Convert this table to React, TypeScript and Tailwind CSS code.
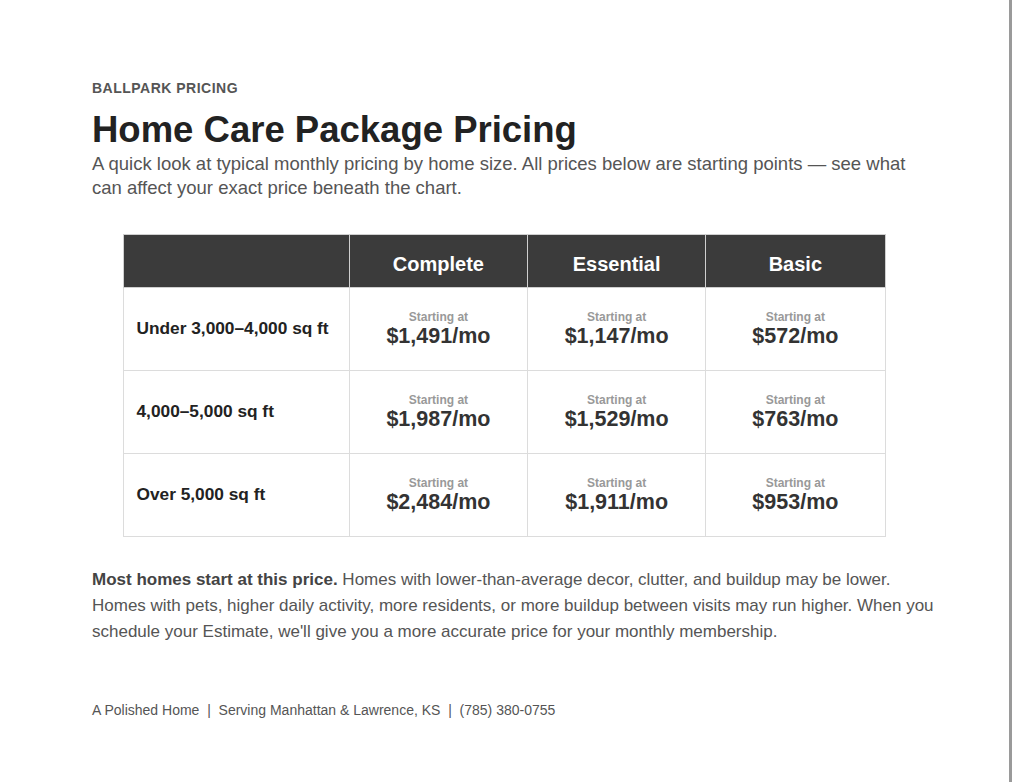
const rows = [
  { label: 'Under 3,000–4,000 sq ft', prices: ['$1,491/mo', '$1,147/mo', '$572/mo'] },
  { label: '4,000–5,000 sq ft', prices: ['$1,987/mo', '$1,529/mo', '$763/mo'] },
  { label: 'Over 5,000 sq ft', prices: ['$2,484/mo', '$1,911/mo', '$953/mo'] },
];

const tiers = ['Complete', 'Essential', 'Basic'];

export default function App() {
  return (
    <div className="flex min-h-[782px] w-full bg-white font-['Liberation_Sans',Arial,sans-serif]">
      <div className="flex-1 pl-[92px] pr-[40px] pt-[80px]">
        <div className="text-[14px] font-bold uppercase leading-4 tracking-[0.035em] text-[#555]">Ballpark Pricing</div>
        <h1 className="mt-[14px] text-[36.5px] font-bold leading-[40px] text-[#222]">Home Care Package Pricing</h1>
        <p className="mt-[2px] max-w-[828px] text-[18.5px] leading-6 text-[#555]">
          A quick look at typical monthly pricing by home size. All prices below are starting points — see what can
          affect your exact price beneath the chart.
        </p>

        <div className="mt-[34px] flex w-[828px] justify-center pr-[4px]">
          <table className="w-[763px] table-fixed border-collapse">
            <colgroup>
              <col className="w-[226px]" />
              <col className="w-[178px]" />
              <col className="w-[178px]" />
              <col className="w-[179px]" />
            </colgroup>
            <thead>
              <tr className="h-[53px] bg-[#3b3b3b]">
                <th className="border border-[#cfcfcf]" />
                {tiers.map((t) => (
                  <th key={t} className="border border-[#cfcfcf] pt-[6px] text-center text-[20px] font-bold text-white">
                    {t}
                  </th>
                ))}
              </tr>
            </thead>
            <tbody>
              {rows.map((r) => (
                <tr key={r.label} className="h-[83px]">
                  <td className="border border-[#dcdcdc] pl-[13px] text-[17.3px] font-bold text-[#222]">{r.label}</td>
                  {r.prices.map((p) => (
                    <td key={p} className="border border-[#dcdcdc] text-center">
                      <div className="text-[12px] font-bold leading-[14px] text-[#999]">Starting at</div>
                      <div className="text-[21.5px] font-bold leading-[24px] text-[#333]">{p}</div>
                    </td>
                  ))}
                </tr>
              ))}
            </tbody>
          </table>
        </div>

        <p className="mt-[30px] max-w-[850px] text-[17px] leading-[26px] text-[#555]">
          <span className="font-bold text-[#444]">Most homes start at this price.</span> Homes with lower-than-average
          decor, clutter, and buildup may be lower. Homes with pets, higher daily activity, more residents, or more
          buildup between visits may run higher. When you schedule your Estimate, we'll give you a more accurate price
          for your monthly membership.
        </p>

        <div className="mt-[55px] text-[14px] leading-5 text-[#555]">
          A Polished Home&nbsp; |&nbsp; Serving Manhattan &amp; Lawrence, KS&nbsp; |&nbsp; (785) 380-0755
        </div>
      </div>
      <div className="w-[3px] bg-[#9a9a9a]" />
    </div>
  );
}
